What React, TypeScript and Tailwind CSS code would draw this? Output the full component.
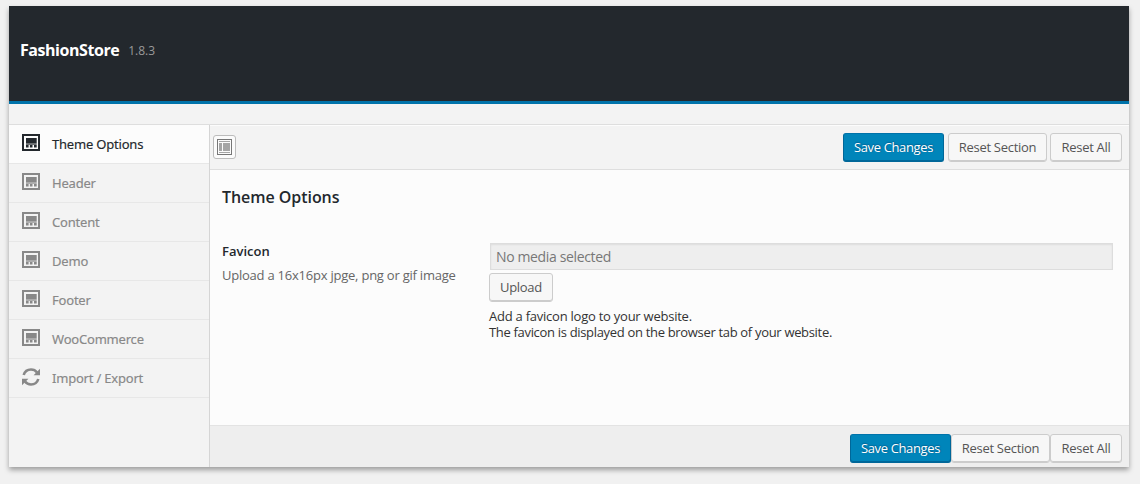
import React from "react";

function TemplateIcon() {
  return (
    <svg width="18" height="17" viewBox="0 0 18 17" fill="currentColor" className="block">
      <path fillRule="evenodd" d="M0 0h18v17H0zM2 2v13h14V2z" />
      <path d="M4 4h10.7v5.5H4zM4 11h2.6v2.5H4zM7.9 11h2.6v2.5H7.9zM12 11h2.7v2.5H12z" />
      <path d="M4 9.5h10.7V11H4z" opacity="0.65" />
    </svg>
  );
}

function RefreshIcon() {
  return (
    <svg width="18" height="18" viewBox="0 0 18 18" className="block">
      <g fill="none" stroke="currentColor" strokeWidth="2.6">
        <path d="M1.7 7C2.7 3.6 5.4 1.5 9 1.5c2.6 0 4.6 1 6 2.9" />
        <path d="M16.3 11c-1 3.4-3.7 5.5-7.3 5.5-2.6 0-4.6-1-6-2.9" />
      </g>
      <path d="M18 .8v6.4h-6.4zM0 17.2v-6.4h6.4z" fill="currentColor" />
    </svg>
  );
}

function ExpandIcon() {
  return (
    <svg width="15" height="16" viewBox="0 0 15 16" shapeRendering="crispEdges" className="block">
      <path fill="#777777" fillRule="evenodd" d="M0 0h15v16H0zM1 1v14h13V1z" />
      <path fill="#a5a5a5" d="M2 2h11v1H2zM2 4h3v8H2zM6 4h7v8H6zM2 13h11v1H2z" />
    </svg>
  );
}

const sections = ["Theme Options", "Header", "Content", "Demo", "Footer", "WooCommerce", "Import / Export"];

function PrimaryButton() {
  return (
    <button className="h-[29px] w-[101px] whitespace-nowrap rounded-[3px] border border-[#006799] border-t-[#0073aa] bg-[#0085ba] pt-px text-[13px] tracking-[-0.37px] text-white shadow-[inset_0_-1px_0_#006799] [text-shadow:0_-1px_1px_#006799,1px_0_1px_#006799]">
      Save Changes
    </button>
  );
}

function Button({ children, className }: { children: React.ReactNode; className: string }) {
  return (
    <button
      className={`h-[29px] whitespace-nowrap rounded-[3px] border border-[#cccccc] bg-[#f7f7f7] pt-px text-[13px] tracking-[-0.3px] text-[#555555] shadow-[inset_0_-1px_0_#cccccc] ${className}`}
    >
      {children}
    </button>
  );
}

export default function App() {
  return (
    <div className="h-[484px] w-[1140px] overflow-hidden bg-[#f1f1f1] pl-[9px] pt-[6px] font-['Open_Sans',sans-serif]">
      <div className="flex h-[461px] w-[1120px] flex-col bg-[#f3f3f3] shadow-[0_3px_5px_rgba(0,0,0,0.35)]">
        <header className="flex h-[98px] shrink-0 items-start border-b-[3px] border-[#0073aa] bg-[#23282d] pl-[11px] pt-[32px]">
          <h1 className="text-[16px] font-bold leading-6 tracking-[-0.45px] text-white">FashionStore</h1>
          <span className="ml-[9px] text-[12px] leading-[25px] text-[#999999]">1.8.3</span>
        </header>
        <div className="h-[21px] shrink-0 border-b border-[#dedede]" />
        <div className="flex min-h-0 flex-1">
          <nav className="w-[201px] shrink-0 border-r border-[#d5d5d5] font-['Noto_Sans',sans-serif]">
            {sections.map((s, i) => (
              <div
                key={s}
                className={`flex h-[39px] items-start border-b border-[#e7e7e7] pl-[13px] ${i === 0 ? "bg-[#fcfcfc] text-[#23282d]" : "text-[#888888]"}`}
              >
                <span className="mt-[9px]">{i === 6 ? <RefreshIcon /> : <TemplateIcon />}</span>
                <span className="ml-[12px] mt-[10px] whitespace-nowrap text-[13px] font-normal leading-[18px] tracking-[-0.2px] [-webkit-text-stroke:0.15px_currentColor]">{s}</span>
              </div>
            ))}
          </nav>
          <section className="flex min-w-0 flex-1 flex-col bg-[#fcfcfc]">
            <div className="flex h-[45px] shrink-0 items-start border-b border-[#dedede] bg-[#f3f3f3] pl-[3px] pr-[7px] shadow-[inset_0_1px_0_#fcfcfc]">
              <button aria-label="Expand" className="mt-[10px] flex h-[24px] w-[23px] items-center justify-center rounded-[3px] border border-[#bcbcbc] bg-[#fbfbfb]">
                <ExpandIcon />
              </button>
              <div className="ml-auto mt-[8px] flex">
                <PrimaryButton />
                <Button className="ml-[4px] w-[99px]">Reset Section</Button>
                <Button className="ml-[3px] w-[72px]">Reset All</Button>
              </div>
            </div>
            <main className="min-h-0 flex-1 pl-[12px] pt-[15px]">
              <h2 className="text-[16px] font-semibold leading-6 tracking-[-0.05px] text-[#23282d]">Theme Options</h2>
              <div className="mt-[34px] flex">
                <div className="w-[267px]">
                  <h3 className="-mt-px text-[13px] font-semibold leading-[18px] text-[#23282d]">Favicon</h3>
                  <p className="mt-[6px] whitespace-nowrap text-[13px] leading-[18px] tracking-[-0.23px] text-[#666666]">Upload a 16x16px jpge, png or gif image</p>
                </div>
                <div className="text-[#444444]">
                  <div className="ml-px h-[27px] w-[623px] border border-[#dddddd] bg-[#eeeeee] pl-[5px] text-[14px] leading-[26px] tracking-[-0.36px] text-[#777777] shadow-[inset_0_1px_2px_rgba(0,0,0,0.07)]">
                    No media selected
                  </div>
                  <Button className="mt-[3px] block w-[64px]">Upload</Button>
                  <p className="mt-[6px] whitespace-nowrap text-[13px] leading-4 text-[#333333]">
                    <span className="tracking-[-0.24px]">Add a favicon logo to your website.</span>
                    <br />
                    <span className="tracking-[-0.32px]">The favicon is displayed on the browser tab of your website.</span>
                  </p>
                </div>
              </div>
            </main>
            <footer className="flex h-[42px] shrink-0 items-start justify-end border-t border-[#e3e3e3] bg-[#eeeeee] pr-[7px] pt-[8px]">
              <PrimaryButton />
              <Button className="w-[99px]">Reset Section</Button>
              <Button className="w-[72px]">Reset All</Button>
            </footer>
          </section>
        </div>
      </div>
    </div>
  );
}
